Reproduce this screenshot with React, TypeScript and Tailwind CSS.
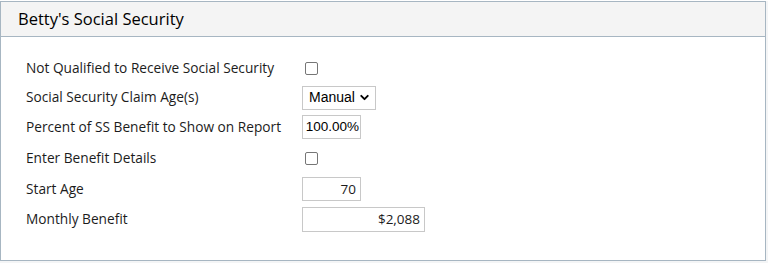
import { ChevronDown } from "lucide-react";

const rowLabel = "w-[276px] shrink-0";
const box = "ml-[3px] block h-[13px] w-[13px] rounded-[2px] border border-[#767676] bg-white";

export default function App() {
	return (
		<div className="h-[263px] bg-[#f4f5f6] font-['Open_Sans',sans-serif] text-[13.7px] text-[#1c1c1c]">
			<div className="mt-px w-[766px] border border-[#a7b6c2] bg-white">
				<div className="flex h-[35px] items-center border-b border-[#a7b6c2] bg-[#f4f4f4] pl-[17px] text-[16.5px] text-black">
					Betty's Social Security
				</div>
				<div className="flex flex-col pt-[16px] pb-[26px] pl-[25px]">
					<div className="flex h-[30px] items-center">
						<span className={rowLabel}>Not Qualified to Receive Social Security</span>
						<span className={box} />
					</div>
					<div className="flex h-[29px] items-center">
						<span className={rowLabel}>Social Security Claim Age(s)</span>
						<div className="flex h-[24px] w-[74px] items-center justify-between border border-[#c8c8c8] pr-1 pl-[6px] font-['Liberation_Sans',sans-serif] text-[14px] text-black">
							Manual
							<ChevronDown size={13} strokeWidth={3.5} />
						</div>
					</div>
					<div className="flex h-[30px] items-center">
						<span className={rowLabel}>Percent of SS Benefit to Show on Report</span>
						<div className="flex h-[24px] w-[59px] items-center justify-end border border-[#c8c8c8] pr-[1px] font-['Liberation_Sans',sans-serif] text-[13.5px] text-black">
							100.00%
						</div>
					</div>
					<div className="flex h-[32px] items-center">
						<span className={rowLabel}>Enter Benefit Details</span>
						<span className={box} />
					</div>
					<div className="flex h-[30px] items-center">
						<span className={rowLabel}>Start Age</span>
						<div className="flex h-[24px] w-[59px] items-center justify-end border border-[#c8c8c8] pr-[4px] text-[13.5px]">
							70
						</div>
					</div>
					<div className="flex h-[30px] items-center">
						<span className={rowLabel}>Monthly Benefit</span>
						<div className="flex h-[25px] w-[123px] items-center justify-end border border-[#c8c8c8] pr-[4px] text-[13.5px]">
							$2,088
						</div>
					</div>
				</div>
			</div>
		</div>
	);
}
